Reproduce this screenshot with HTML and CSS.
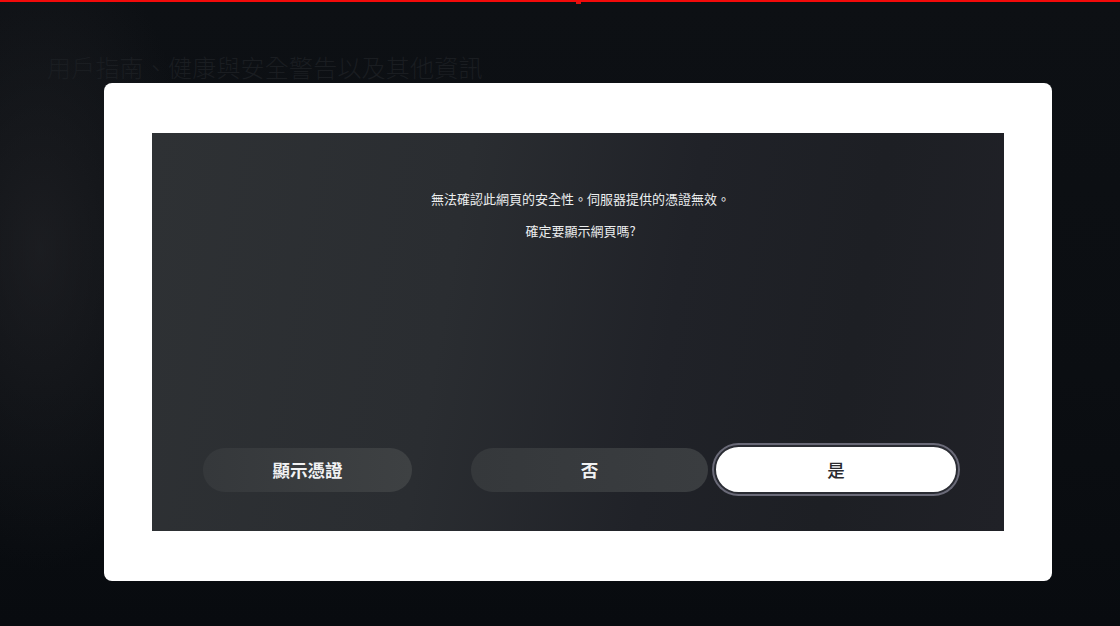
FILE: index.html
```html
<!DOCTYPE html>
<html lang="zh-Hant">
<head>
<meta charset="utf-8">
<title>憑證</title>
<link rel="stylesheet" href="styles.css">
</head>
<body>
<div class="topbar"><span class="notch"></span></div>
<main class="page">
  <h1 class="bg-title">用戶指南、健康與安全警告以及其他資訊</h1>
  <section class="card">
    <div class="panel">
      <div class="message">
        <p class="line">無法確認此網頁的安全性。伺服器提供的憑證無效。</p>
        <p class="line">確定要顯示網頁嗎?</p>
      </div>
      <div class="actions">
        <button class="btn btn-cert">顯示憑證</button>
        <button class="btn btn-no">否</button>
        <button class="btn btn-yes">是</button>
      </div>
    </div>
  </section>
</main>
</body>
</html>
```

FILE: styles.css
```css
* { box-sizing: border-box; }

html, body {
  margin: 0;
  height: 100%;
}

body {
  width: 1120px;
  height: 626px;
  overflow: hidden;
  font-family: "Noto Sans CJK TC", "Noto Sans", sans-serif;
  background:
    radial-gradient(ellipse 160px 320px at 40px 250px, rgba(40, 40, 44, 0.55), rgba(40, 40, 44, 0) 100%),
    linear-gradient(180deg, #0d1014 0%, #0b0e12 60%, #080b0f 100%);
  position: relative;
}

.topbar {
  height: 2px;
  background: #f20a0a;
  position: relative;
}

.notch {
  position: absolute;
  left: 576px;
  top: 2px;
  width: 5px;
  height: 2px;
  background: #e01010;
}

.page {
  padding-top: 51px;
}

.bg-title {
  margin: 0 0 2px 47px;
  font-size: 24px;
  line-height: 28px;
  font-weight: 300;
  color: #1a1d21;
  letter-spacing: 0.2px;
}

.card {
  margin-left: 104px;
  width: 948px;
  height: 498px;
  background: #ffffff;
  border-radius: 8px;
  padding: 50px 48px;
}

.panel {
  height: 398px;
  background:
    linear-gradient(100deg, #2e3134 0%, #2a2d31 35%, #202228 60%, #1d1f24 80%, #202127 100%);
  display: flex;
  flex-direction: column;
  justify-content: space-between;
  padding: 56px 46px 37px 51px;
}

.message {
  text-align: center;
  color: #eceeef;
  font-size: 13px;
  line-height: 20px;
}

.line {
  margin: 0 0 12px;
}

.actions {
  display: flex;
  align-items: center;
}

.btn {
  font-family: "Noto Sans CJK TC", "Noto Sans", sans-serif;
  font-size: 17.5px;
  font-weight: 700;
  border: none;
  border-radius: 22px;
  height: 44px;
  padding: 0;
  cursor: pointer;
}

.btn-cert {
  width: 209px;
  margin-right: 59px;
  color: #f1f2f3;
  background: linear-gradient(90deg, #35383b, #3e4143);
}

.btn-no {
  width: 237px;
  margin-right: 6px;
  color: #f1f2f3;
  background: linear-gradient(90deg, #35383b, #3a3d40);
}

.btn-yes {
  width: 244px;
  height: 49px;
  border-radius: 25px;
  color: #2a2a2e;
  background: #ffffff;
  border: 2px solid #2a2c33;
  box-shadow: 0 0 0 2px #6a6a78;
  font-weight: 500;
}
```
